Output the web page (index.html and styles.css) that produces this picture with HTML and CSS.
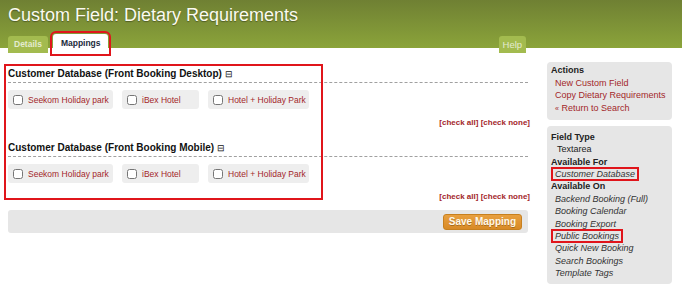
FILE: index.html
```html
<!DOCTYPE html>
<html lang="en">
<head>
    <meta charset="UTF-8">
    <title>Custom Field: Dietary Requirements</title>
    <link rel="stylesheet" href="styles.css">
</head>
<body>
    <div class="header">
        <h1>Custom Field: Dietary Requirements</h1>
        <div class="tabs">
            <a class="tab">Details</a>
            <a class="tab active marked">Mappings</a>
            <a class="tab help">Help</a>
        </div>
    </div>

    <div class="page">
        <div class="main">
            <div class="mappings">
                <div class="marker marker-sections"></div>

                <div class="section">
                    <h2>Customer Database (Front Booking Desktop) <span class="toggle">&#8863;</span></h2>
                    <div class="options">
                        <label class="option"><input type="checkbox"> Seekom Holiday park</label>
                        <label class="option"><input type="checkbox"> iBex Hotel</label>
                        <label class="option"><input type="checkbox"> Hotel + Holiday Park</label>
                    </div>
                    <div class="checkers">[<a>check all</a>] [<a>check none</a>]</div>
                </div>

                <div class="section">
                    <h2>Customer Database (Front Booking Mobile) <span class="toggle">&#8863;</span></h2>
                    <div class="options">
                        <label class="option"><input type="checkbox"> Seekom Holiday park</label>
                        <label class="option"><input type="checkbox"> iBex Hotel</label>
                        <label class="option"><input type="checkbox"> Hotel + Holiday Park</label>
                    </div>
                    <div class="checkers">[<a>check all</a>] [<a>check none</a>]</div>
                </div>
            </div>

            <div class="save-bar">
                <button class="save">Save Mapping</button>
            </div>
        </div>

        <div class="sidebar">
            <div class="box actions">
                <h3>Actions</h3>
                <a class="action">New Custom Field</a>
                <a class="action">Copy Dietary Requirements</a>
                <a class="action"><span class="raquo">&laquo;</span> Return to Search</a>
            </div>

            <div class="box">
                <h3>Field Type</h3>
                <div class="value">Textarea</div>
                <h3>Available For</h3>
                <div class="item"><span class="marked">Customer Database</span></div>
                <h3>Available On</h3>
                <div class="item">Backend Booking (Full)</div>
                <div class="item">Booking Calendar</div>
                <div class="item">Booking Export</div>
                <div class="item"><span class="marked">Public Bookings</span></div>
                <div class="item">Quick New Booking</div>
                <div class="item">Search Bookings</div>
                <div class="item">Template Tags</div>
            </div>
        </div>
    </div>
</body>
</html>
```

FILE: styles.css
```css
body {
    margin: 0;
    font-family: "Liberation Sans", Arial, sans-serif;
    font-size: 10px;
    color: #222;
    background: #fff;
}

a {
    color: #a3262a;
    cursor: pointer;
}

.header {
    height: 48px;
    background: linear-gradient(180deg, #6f8033, #8ba43a);
    padding: 0 8px;
    box-sizing: border-box;
}

h1 {
    margin: 0;
    padding-top: 5px;
    font-size: 18px;
    font-weight: normal;
    color: #fbfbf0;
    text-shadow: 0 1px 1px rgba(0, 0, 0, 0.35);
    height: 25px;
}

.tabs {
    display: flex;
    align-items: flex-end;
    height: 23px;
    gap: 5px;
}

.tab {
    display: block;
    height: 17px;
    line-height: 17px;
    padding: 0 6px;
    font-size: 8.5px;
    font-weight: bold;
    color: #e4ebcf;
    background: #a3bb4f;
    border-radius: 3px 3px 0 0;
}

.tab.active {
    background: #fff;
    color: #1b2a3a;
    height: 19px;
    line-height: 19px;
    padding: 0 7px 0 8px;
}

.tab.help {
    margin-left: 386px;
    padding: 0 4px;
    font-weight: normal;
    font-size: 9.5px;
}

.marked {
    outline: 2px solid #e0151b;
    outline-offset: 1px;
}

.page {
    display: flex;
    padding: 14px 10px 0 8px;
}

.main {
    width: 520px;
}

.mappings {
    position: relative;
}

.marker {
    position: absolute;
    border: 2px solid #e0151b;
    pointer-events: none;
}

.marker-sections {
    left: -4px;
    top: 2px;
    width: 315px;
    height: 132px;
}

.section {
    padding-top: 6px;
    height: 67px;
}

.section + .section {
    padding-top: 7px;
}

h2 {
    margin: 0;
    font-size: 10px;
    font-weight: bold;
    color: #111;
    padding-bottom: 2px;
    border-bottom: 1px dashed #a0a0a0;
    line-height: 12px;
}

.toggle {
    font-weight: normal;
    font-size: 9px;
}

.options {
    display: flex;
    gap: 9px;
    margin-top: 7px;
}

.option {
    display: flex;
    align-items: center;
    box-sizing: border-box;
    height: 19px;
    padding: 0 5px;
    background: #eeeeee;
    border-radius: 3px;
    color: #a3262a;
    font-size: 8.5px;
    white-space: nowrap;
}

.option input {
    margin: 0 5px 0 0;
    width: 10px;
    height: 10px;
}

.option:nth-child(1) { width: 105px; }
.option:nth-child(2) { width: 77px; }
.option:nth-child(3) { width: 101px; }

.checkers {
    text-align: right;
    margin-top: 9px;
    margin-right: -2px;
    font-size: 8px;
    font-weight: bold;
    color: #a3262a;
}

.checkers a {
    text-decoration: none;
}

.save-bar {
    margin-top: 1px;
    height: 23px;
    background: #e6e6e6;
    border-radius: 3px;
    display: flex;
    justify-content: flex-end;
    align-items: center;
    padding-right: 6px;
}

.save {
    font-family: inherit;
    font-size: 10px;
    font-weight: bold;
    color: #fff8e8;
    background: linear-gradient(180deg, #e8a040, #d88a26);
    border: 1px solid #c7801f;
    border-radius: 3px;
    height: 16px;
    padding: 0 5px;
    text-shadow: 0 1px 0 rgba(0, 0, 0, 0.25);
}

.sidebar {
    margin-left: 19px;
    width: 125px;
    display: flex;
    flex-direction: column;
    gap: 6px;
}

.box {
    background: #e6e6e6;
    border-radius: 4px;
    padding: 5px 4px 4px 4px;
    line-height: 12.4px;
    font-size: 9px;
    white-space: nowrap;
}

.box.actions {
    padding-top: 2px;
    line-height: 12.7px;
}

h3 {
    margin: 0;
    font-size: 9px;
    font-weight: bold;
    color: #222;
}

.action {
    display: block;
    padding-left: 4px;
    text-decoration: none;
}

.raquo {
    font-size: 7px;
}

.value {
    padding-left: 6px;
}

.item {
    padding-left: 4px;
    font-style: italic;
    color: #333;
}

.item .marked {
    outline-offset: 0;
    padding: 0 2px;
    margin-left: -2px;
}
```
